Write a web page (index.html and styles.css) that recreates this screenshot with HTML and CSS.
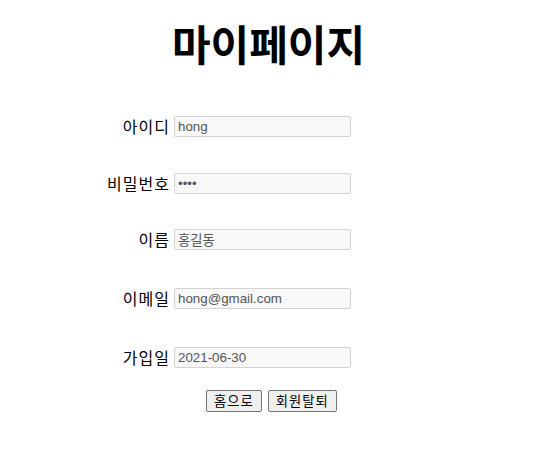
FILE: index.html
```html
<!DOCTYPE html>
<html lang="ko">
<head>
<meta charset="utf-8">
<title>마이페이지</title>
<link rel="stylesheet" href="styles.css">
</head>
<body>
<h1 class="title">마이페이지</h1>
<form class="info">
  <label class="label" for="id">아이디</label>
  <input class="field" id="id" type="text" value="hong" readonly>
  <label class="label" for="pw">비밀번호</label>
  <input class="field" id="pw" type="password" value="1234" readonly>
  <label class="label" for="name">이름</label>
  <input class="field" id="name" type="text" value="홍길동" readonly>
  <label class="label" for="email">이메일</label>
  <input class="field" id="email" type="text" value="hong@gmail.com" readonly>
  <label class="label" for="date">가입일</label>
  <input class="field" id="date" type="text" value="2021-06-30" readonly>
</form>
<div class="actions">
  <button class="btn" type="button">홈으로</button>
  <button class="btn" type="button">회원탈퇴</button>
</div>
</body>
</html>
```
FILE: styles.css
```css
body {
  margin: 8px;
  font-family: "Liberation Sans", "Noto Sans CJK KR", sans-serif;
  background: #fff;
  color: #000;
}
.title {
  margin: 5px 0 0;
  text-align: center;
  font-family: "Noto Sans CJK KR", sans-serif;
  font-weight: 700;
  font-size: 42px;
  line-height: 60px;
}
.info {
  display: grid;
  grid-template-columns: 161px 177px;
  grid-template-rows: 21px 57px 56px 59px 59px;
  column-gap: 5px;
  margin-top: 43px;
  align-items: end;
}
.label {
  text-align: right;
  font-family: "Noto Sans CJK KR", sans-serif;
  font-size: 16px;
  line-height: 20px;
  letter-spacing: 1px;
  margin-right: -1px;
  padding-bottom: 1px;
}
.field {
  box-sizing: border-box;
  width: 177px;
  height: 21px;
  margin: 0;
  padding: 1px 3px;
  border: 1px solid #d3d3d3;
  border-radius: 2px;
  background: #f8f8f8;
  color: #545454;
  font-family: "Liberation Sans", "Noto Sans CJK KR", sans-serif;
  font-size: 13.33px;
}
.actions {
  display: flex;
  gap: 6px;
  margin-top: 22px;
  padding-left: 198px;
}
.btn {
  box-sizing: border-box;
  height: 22px;
  padding: 1px 7px;
  border: 1px solid #767676;
  border-radius: 2px;
  background: #efefef;
  color: #000;
  font-family: "Noto Sans CJK KR", sans-serif;
  font-size: 13.33px;
  line-height: 18px;
  letter-spacing: 1px;
}
```
